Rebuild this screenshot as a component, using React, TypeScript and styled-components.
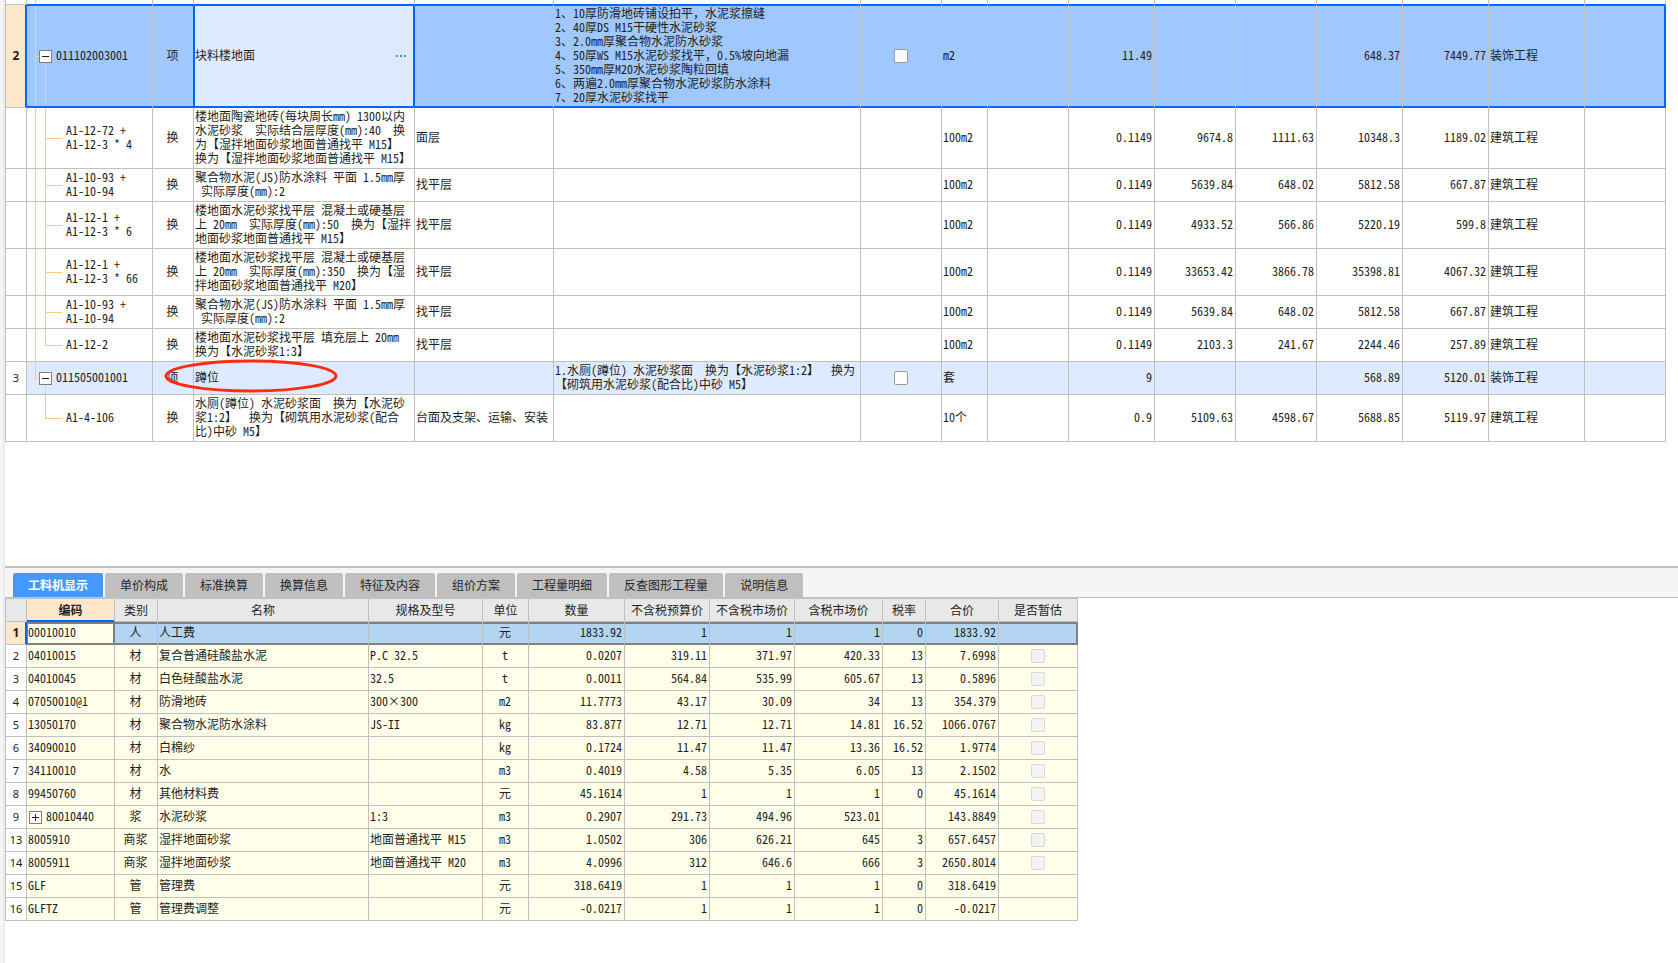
import React from "react";
import styled, { createGlobalStyle, css } from "styled-components";

const line = "#c0c0c0";
const blue = "#0066ff";
const peach = "#ffe7c9";
const tree = "#ffcc80";
const frame = "#808080";

const GlobalStyle = createGlobalStyle`
  * { box-sizing: border-box; }
  body {
    margin: 0;
    background: #fff;
    color: #1e1e1e;
    font: 12px/14px "Noto Sans Mono CJK SC", "Noto Sans CJK SC", monospace;
  }
  button, input { font: inherit; color: inherit; margin: 0; }
`;

const Page = styled.div`
  display: flex;
  min-height: 100vh;
`;

const EdgeStrip = styled.div`
  flex: none;
  width: 5px;
  background: #f5f5f5;
  border-right: 2px solid #ebebeb;
`;

const Panes = styled.main`
  flex: 1;
  min-width: 0;
  display: flex;
  flex-direction: column;
`;

const UpperPane = styled.section`
  flex: 1;
  padding-right: 12px;
`;

const LowerPane = styled.section`
  border-top: 2px solid ${line};
  padding-bottom: 42px;
`;

const Grid = styled.table`
  table-layout: fixed;
  border-collapse: separate;
  border-spacing: 0;
  border-left: 1px solid ${line};
`;

const BillGrid = styled(Grid)`
  width: 100%;
  min-width: 1354px;
`;

const ResourceGrid = styled(Grid)`
  width: 1073px;
  border-top: 1px solid ${line};
`;

type Align = "left" | "center" | "right";

const Cell = styled.td<{ $align?: Align }>`
  padding: 1px 2px 3px 1px;
  border-right: 1px solid ${line};
  border-bottom: 1px solid ${line};
  text-align: ${(p) => p.$align ?? "left"};
  vertical-align: middle;
  white-space: pre;
`;

const CheckCell = styled(Cell)`
  && { padding: 2px; }
`;

const RowNumber = styled.th<{ $current?: boolean }>`
  padding: 2px 0;
  border-right: 1px solid ${line};
  border-bottom: 1px solid ${line};
  background: #fff;
  font-family: "Noto Sans", sans-serif;
  font-size: 11px;
  font-weight: 400;
  ${(p) =>
    p.$current &&
    css`
      background: ${peach};
      border-right-color: ${blue};
      box-shadow: inset -1px 0 ${blue};
      font-weight: 700;
      font-size: 12px;
    `}
`;

const bar = `linear-gradient(${tree}, ${tree})`;

type Branch = "pass" | "open" | "lastOpen" | "item" | "lastItem" | "itemAlone";

/* Guide lines of the outline: the outer trunk is at 8px and the inner one at 18px. */
const branches: Record<Branch, string[]> = {
  pass: ["8px 0 / 1px 100%"],
  open: ["8px 0 / 1px 100%", "8px 50% / 5px 1px", "18px 100% / 1px 50%"],
  lastOpen: ["8px 0 / 1px 50%", "8px 50% / 5px 1px", "18px 100% / 1px 50%"],
  item: ["8px 0 / 1px 100%", "18px 0 / 1px 100%", "18px 50% / 17px 1px"],
  lastItem: ["8px 0 / 1px 100%", "18px 0 / 1px 50%", "18px 50% / 17px 1px"],
  itemAlone: ["18px 0 / 1px 50%", "18px 50% / 17px 1px"],
};

const CodeCell = styled(Cell)<{ $branch: Branch; $child?: boolean }>`
  padding-left: ${(p) => (p.$child ? "39px" : "11px")};
  background: ${(p) => branches[p.$branch].map((b) => `${bar} ${b} no-repeat`).join(", ")};
`;

const BillRow = styled.tr<{ $kind: "selected" | "item" | "norm" }>`
  ${(p) => p.$kind === "item" && css`> td { background-color: #deeaff; }`}
  ${(p) =>
    p.$kind === "selected" &&
    css`
      > td {
        background-color: #a0c8ff;
        border-bottom-color: ${blue};
        box-shadow: inset 0 1px ${blue}, inset 0 -1px ${blue};
      }
      > td:last-child {
        border-right-color: ${blue};
        box-shadow: inset 0 1px ${blue}, inset -1px -1px ${blue};
      }
      > td:nth-child(3) { border-right-color: ${blue}; }
      > td:nth-child(4) {
        background-color: #deeaff;
        border-right-color: ${blue};
        box-shadow: inset 1px 1px ${blue}, inset -1px -1px ${blue};
      }
    `}
`;

const SpacerRow = styled.tr`
  height: 5px;
  > td { padding: 0; border-bottom-color: ${blue}; }
  > td:first-child { border-bottom-color: ${line}; }
`;

const Line = styled.div`
  display: flex;
  align-items: center;
`;

const NameLine = styled(Line)`
  justify-content: space-between;
  padding-right: 6px;
`;

const Expander = styled.button`
  flex: none;
  width: 13px;
  height: 13px;
  padding: 0;
  margin: 2px 4px 0 1px;
  border: 1px solid ${frame};
  background: #fff;
  display: flex;
`;

const MoreButton = styled.button`
  flex: none;
  padding: 2px 0 0;
  border: 0;
  background: none;
  display: flex;
`;

const Check = styled.input`
  appearance: none;
  display: block;
  width: 14px;
  height: 14px;
  margin: 0 auto;
  border: 1px solid #999;
  border-radius: 2px;
  background: #fff;
  &:disabled { border-color: #d9d9d9; background: #f3f3f3; }
`;

const MarkedCell = styled(Cell)`
  position: relative;
`;

const Marker = styled.svg`
  position: absolute;
  left: -30px;
  top: -4px;
  pointer-events: none;
`;

const TabBar = styled.div`
  display: flex;
  gap: 2px;
  padding: 5px 8px 0;
  height: 30px;
  background: #f5f5f5;
  border-bottom: 1px solid ${line};
`;

const Tab = styled.button<{ $active?: boolean }>`
  height: 24px;
  padding: 0 15px;
  border: 0;
  border-radius: 2px 2px 0 0;
  background: ${(p) => (p.$active ? "#4499ff" : "#bfbfbf")};
  color: ${(p) => (p.$active ? "#fff" : "#262626")};
  font-family: "Noto Sans CJK SC", sans-serif;
  font-weight: ${(p) => (p.$active ? 700 : 400)};
  line-height: 24px;
`;

const Head = styled.th<{ $current?: boolean }>`
  height: 23px;
  padding: 0;
  border-right: 1px solid ${line};
  border-bottom: 1px solid ${line};
  background: #e8e8e8;
  font-weight: 400;
  ${(p) =>
    p.$current &&
    css`
      background: ${peach};
      font-weight: 700;
      border-bottom-color: ${blue};
      box-shadow: inset 0 -1px ${blue};
    `}
`;

const ResourceRow = styled.tr<{ $current?: boolean }>`
  height: 23px;
  > td { background: #ffffea; padding: 0 2px 2px 1px; }
  ${(p) =>
    p.$current &&
    css`
      > td {
        background: #b3d5f2;
        border-bottom-color: ${frame};
        box-shadow: inset 0 2px ${frame}, inset 0 -1px ${frame};
      }
      > td:nth-child(2) {
        background: #ffffea;
        border-right-color: ${frame};
        box-shadow: inset 1px 2px ${frame}, inset -1px -1px ${frame};
      }
      > td:last-child {
        border-right-color: ${frame};
        box-shadow: inset 0 2px ${frame}, inset -1px -1px ${frame};
      }
    `}
`;

const ToggleIcon = ({ plus }: { plus?: boolean }) => (
  <svg width="11" height="11" viewBox="0 0 11 11" stroke="#1e1e1e" aria-hidden="true">
    <path d={plus ? "M2 5.5H9M5.5 2V9" : "M2 5.5H9"} />
  </svg>
);

interface Bill {
  no?: string;
  code: string;
  branch: Branch;
  type: string;
  name: string;
  spec?: string;
  feature?: string;
  check?: boolean;
  unit: string;
  values: string[];
  trade: string;
  kind: "selected" | "item" | "norm";
  marked?: boolean;
}

/* A zero leaves the column to take the rest of the window's width. */
const billWidths = [21, 126, 41, 221, 139, 0, 81, 46, 81, 86, 81, 81, 86, 86, 96, 81];

const bills: Bill[] = [
  {
    no: "2", code: "011102003001", branch: "open", type: "项", name: "块料楼地面", kind: "selected", check: true,
    feature:
      "1、10厚防滑地砖铺设拍平，水泥浆擦缝\n2、40厚DS M15干硬性水泥砂浆\n3、2.0mm厚聚合物水泥防水砂浆\n4、50厚WS M15水泥砂浆找平，0.5%坡向地漏\n5、350mm厚M20水泥砂浆陶粒回填\n6、两遍2.0mm厚聚合物水泥砂浆防水涂料\n7、20厚水泥砂浆找平",
    unit: "m2", values: ["11.49", "", "", "648.37", "7449.77"], trade: "装饰工程",
  },
  {
    code: "A1-12-72 +\nA1-12-3 * 4", branch: "item", type: "换", kind: "norm", spec: "面层",
    name: "楼地面陶瓷地砖(每块周长mm) 1300以内\n水泥砂浆  实际结合层厚度(mm):40  换\n为【湿拌地面砂浆地面普通找平 M15】\n换为【湿拌地面砂浆地面普通找平 M15】",
    unit: "100m2", values: ["0.1149", "9674.8", "1111.63", "10348.3", "1189.02"], trade: "建筑工程",
  },
  {
    code: "A1-10-93 +\nA1-10-94", branch: "item", type: "换", kind: "norm", spec: "找平层",
    name: "聚合物水泥(JS)防水涂料 平面 1.5mm厚\n 实际厚度(mm):2",
    unit: "100m2", values: ["0.1149", "5639.84", "648.02", "5812.58", "667.87"], trade: "建筑工程",
  },
  {
    code: "A1-12-1 +\nA1-12-3 * 6", branch: "item", type: "换", kind: "norm", spec: "找平层",
    name: "楼地面水泥砂浆找平层 混凝土或硬基层\n上 20mm  实际厚度(mm):50  换为【湿拌\n地面砂浆地面普通找平 M15】",
    unit: "100m2", values: ["0.1149", "4933.52", "566.86", "5220.19", "599.8"], trade: "建筑工程",
  },
  {
    code: "A1-12-1 +\nA1-12-3 * 66", branch: "item", type: "换", kind: "norm", spec: "找平层",
    name: "楼地面水泥砂浆找平层 混凝土或硬基层\n上 20mm  实际厚度(mm):350  换为【湿\n拌地面砂浆地面普通找平 M20】",
    unit: "100m2", values: ["0.1149", "33653.42", "3866.78", "35398.81", "4067.32"], trade: "建筑工程",
  },
  {
    code: "A1-10-93 +\nA1-10-94", branch: "item", type: "换", kind: "norm", spec: "找平层",
    name: "聚合物水泥(JS)防水涂料 平面 1.5mm厚\n 实际厚度(mm):2",
    unit: "100m2", values: ["0.1149", "5639.84", "648.02", "5812.58", "667.87"], trade: "建筑工程",
  },
  {
    code: "A1-12-2", branch: "lastItem", type: "换", kind: "norm", spec: "找平层",
    name: "楼地面水泥砂浆找平层 填充层上 20mm\n换为【水泥砂浆1:3】",
    unit: "100m2", values: ["0.1149", "2103.3", "241.67", "2244.46", "257.89"], trade: "建筑工程",
  },
  {
    no: "3", code: "011505001001", branch: "lastOpen", type: "项", name: "蹲位", kind: "item", check: true, marked: true,
    feature: "1.水厕(蹲位) 水泥砂浆面  换为【水泥砂浆1:2】  换为\n【砌筑用水泥砂浆(配合比)中砂 M5】",
    unit: "套", values: ["9", "", "", "568.89", "5120.01"], trade: "装饰工程",
  },
  {
    code: "A1-4-106", branch: "itemAlone", type: "换", kind: "norm", spec: "台面及支架、运输、安装",
    name: "水厕(蹲位) 水泥砂浆面  换为【水泥砂\n浆1:2】  换为【砌筑用水泥砂浆(配合\n比)中砂 M5】",
    unit: "10个", values: ["0.9", "5109.63", "4598.67", "5688.85", "5119.97"], trade: "建筑工程",
  },
];

const tabs = ["工料机显示", "单价构成", "标准换算", "换算信息", "特征及内容", "组价方案", "工程量明细", "反查图形工程量", "说明信息"];

const resourceWidths = [21, 88, 43, 211, 114, 46, 96, 85, 85, 88, 43, 73, 79];
const heads = ["编码", "类别", "名称", "规格及型号", "单位", "数量", "不含税预算价", "不含税市场价", "含税市场价", "税率", "合价", "是否暂估"];
const aligns: Align[] = ["left", "center", "left", "left", "center", "right", "right", "right", "right", "right", "right"];

const resources: string[][] = [
  ["1", "00010010", "人", "人工费", "", "元", "1833.92", "1", "1", "1", "0", "1833.92"],
  ["2", "04010015", "材", "复合普通硅酸盐水泥", "P.C 32.5", "t", "0.0207", "319.11", "371.97", "420.33", "13", "7.6998"],
  ["3", "04010045", "材", "白色硅酸盐水泥", "32.5", "t", "0.0011", "564.84", "535.99", "605.67", "13", "0.5896"],
  ["4", "07050010@1", "材", "防滑地砖", "300×300", "m2", "11.7773", "43.17", "30.09", "34", "13", "354.379"],
  ["5", "13050170", "材", "聚合物水泥防水涂料", "JS-II", "kg", "83.877", "12.71", "12.71", "14.81", "16.52", "1066.0767"],
  ["6", "34090010", "材", "白棉纱", "", "kg", "0.1724", "11.47", "11.47", "13.36", "16.52", "1.9774"],
  ["7", "34110010", "材", "水", "", "m3", "0.4019", "4.58", "5.35", "6.05", "13", "2.1502"],
  ["8", "99450760", "材", "其他材料费", "", "元", "45.1614", "1", "1", "1", "0", "45.1614"],
  ["9", "80010440", "浆", "水泥砂浆", "1:3", "m3", "0.2907", "291.73", "494.96", "523.01", "", "143.8849"],
  ["13", "8005910", "商浆", "湿拌地面砂浆", "地面普通找平 M15", "m3", "1.0502", "306", "626.21", "645", "3", "657.6457"],
  ["14", "8005911", "商浆", "湿拌地面砂浆", "地面普通找平 M20", "m3", "4.0996", "312", "646.6", "666", "3", "2650.8014"],
  ["15", "GLF", "管", "管理费", "", "元", "318.6419", "1", "1", "1", "0", "318.6419"],
  ["16", "GLFTZ", "管", "管理费调整", "", "元", "-0.0217", "1", "1", "1", "0", "-0.0217"],
];

const estimable = (type: string) => type !== "人" && type !== "管";

const Columns = ({ widths }: { widths: number[] }) => (
  <colgroup>
    {widths.map((w, i) => (
      <col key={i} style={w ? { width: w } : undefined} />
    ))}
  </colgroup>
);

function BillLine({ bill }: { bill: Bill }) {
  const child = bill.kind === "norm";
  const NameCell = bill.marked ? MarkedCell : Cell;
  return (
    <BillRow $kind={bill.kind}>
      <RowNumber scope="row" $current={bill.kind === "selected"}>{bill.no}</RowNumber>
      <CodeCell $branch={bill.branch} $child={child}>
        {child ? bill.code : (
          <Line>
            <Expander type="button" aria-label={`收起 ${bill.code}`}><ToggleIcon /></Expander>
            {bill.code}
          </Line>
        )}
      </CodeCell>
      <Cell $align="center">{bill.type}</Cell>
      <NameCell>
        {bill.kind === "selected" ? (
          <NameLine>
            {bill.name}
            <MoreButton type="button" aria-label="更多">
              <svg width="10" height="2" fill="#3f8fcc" aria-hidden="true">
                <path d="M0 0h2v2H0zM4 0h2v2H4zM8 0h2v2H8z" />
              </svg>
            </MoreButton>
          </NameLine>
        ) : bill.name}
        {bill.marked && (
          <Marker width="176" height="36" viewBox="0 0 176 36" fill="none" aria-hidden="true">
            <ellipse cx="87" cy="18" rx="85" ry="15" stroke="#ff2a12" strokeWidth="3" />
          </Marker>
        )}
      </NameCell>
      <Cell>{bill.spec}</Cell>
      <Cell>{bill.feature}</Cell>
      <CheckCell>{bill.check && <Check type="checkbox" aria-label={bill.name} />}</CheckCell>
      <Cell>{bill.unit}</Cell>
      <Cell />
      {bill.values.map((v, i) => <Cell key={i} $align="right">{v}</Cell>)}
      <Cell>{bill.trade}</Cell>
      <Cell />
    </BillRow>
  );
}

export default function App() {
  return (
    <>
      <GlobalStyle />
      <Page>
        <EdgeStrip />
        <Panes>
          <UpperPane>
            <BillGrid>
              <Columns widths={billWidths} />
              <tbody>
                <SpacerRow>
                  <Cell />
                  <CodeCell $branch="pass" />
                  {billWidths.slice(2).map((_, i) => <Cell key={i} />)}
                </SpacerRow>
                {bills.map((b, i) => <BillLine key={i} bill={b} />)}
              </tbody>
            </BillGrid>
          </UpperPane>
          <LowerPane>
            <TabBar role="tablist">
              {tabs.map((t, i) => (
                <Tab key={t} type="button" role="tab" aria-selected={i === 0} $active={i === 0}>{t}</Tab>
              ))}
            </TabBar>
            <ResourceGrid>
              <Columns widths={resourceWidths} />
              <thead>
                <tr>
                  <Head />
                  {heads.map((h, i) => <Head key={h} scope="col" $current={i === 0}>{h}</Head>)}
                </tr>
              </thead>
              <tbody>
                {resources.map(([no, ...cells], r) => (
                  <ResourceRow key={no} $current={r === 0}>
                    <RowNumber scope="row" $current={r === 0}>{no}</RowNumber>
                    {cells.map((c, i) => (
                      <Cell key={i} $align={aligns[i]}>
                        {no === "9" && i === 0 ? (
                          <Line>
                            <Expander type="button" aria-label={`展开 ${c}`}><ToggleIcon plus /></Expander>
                            {c}
                          </Line>
                        ) : c}
                      </Cell>
                    ))}
                    <CheckCell>
                      {estimable(cells[1]) && <Check type="checkbox" disabled aria-label={`${cells[2]} 是否暂估`} />}
                    </CheckCell>
                  </ResourceRow>
                ))}
              </tbody>
            </ResourceGrid>
          </LowerPane>
        </Panes>
      </Page>
    </>
  );
}
